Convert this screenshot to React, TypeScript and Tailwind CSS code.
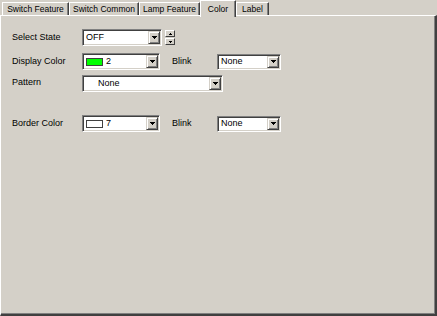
import type { ReactNode } from "react";

const tabs = [
  { label: "Switch Feature", w: "w-[67px]" },
  { label: "Switch Common", w: "w-[70px]" },
  { label: "Lamp Feature", w: "w-[61px]" },
  { label: "Color", w: "w-[36px]", active: true },
  { label: "Label", w: "w-[33px]" },
];

function Arrow() {
  return (
    <svg width="5" height="3" viewBox="0 0 5 3" shapeRendering="crispEdges">
      <rect x="0" y="0" width="5" height="1" fill="#000" />
      <rect x="1" y="1" width="3" height="1" fill="#000" />
      <rect x="2" y="2" width="1" height="1" fill="#000" />
    </svg>
  );
}

function DropButton() {
  return (
    <div className="w-[12px] my-[1px] mr-[1px] flex items-center justify-center bg-[#d4d0c8] border border-t-[#d4d0c8] border-l-[#d4d0c8] border-b-[#404040] border-r-[#404040] shadow-[inset_1px_1px_0_#fff,inset_-1px_-1px_0_#808080]">
      <Arrow />
    </div>
  );
}

function Combo({ className, children }: { className: string; children: ReactNode }) {
  return (
    <div
      className={`flex bg-white border border-t-[#808080] border-l-[#808080] border-b-white border-r-white shadow-[inset_1px_1px_0_#404040,inset_-1px_-1px_0_#d4d0c8] ${className}`}
    >
      <div className="flex-1 flex items-center min-w-0 pl-[3px]">{children}</div>
      <DropButton />
    </div>
  );
}

function Swatch({ fill }: { fill: string }) {
  return <span className={`w-[17px] h-[8px] border border-[#404040] mr-[3px] ${fill}`} />;
}

function Spinner() {
  return (
    <div className="ml-[3px] flex flex-col gap-[1px] w-[10px]">
      {[true, false].map((up) => (
        <div
          key={String(up)}
          className="h-[7px] flex items-center justify-center bg-[#d4d0c8] border border-t-white border-l-white border-b-[#404040] border-r-[#404040]"
        >
          <svg width="3" height="2" viewBox="0 0 3 2" shapeRendering="crispEdges">
            {up ? (
              <>
                <rect x="1" y="0" width="1" height="1" fill="#000" />
                <rect x="0" y="1" width="3" height="1" fill="#000" />
              </>
            ) : (
              <>
                <rect x="0" y="0" width="3" height="1" fill="#000" />
                <rect x="1" y="1" width="1" height="1" fill="#000" />
              </>
            )}
          </svg>
        </div>
      ))}
    </div>
  );
}

export default function App() {
  return (
    <div className="w-[437px] h-[316px] bg-[#d4d0c8] flex flex-col text-[9px] text-black font-['Liberation_Sans',Arial,sans-serif] overflow-hidden">
      {/* tab strip */}
      <div className="flex items-end h-[15px] pl-[2px] text-[8.5px]">
        {tabs.map((t) =>
          t.active ? (
            <div
              key={t.label}
              className={`${t.w} relative z-10 h-[17px] -mb-[2px] bg-[#d4d0c8] border-l border-t border-white border-r border-r-[#404040] shadow-[inset_-1px_0_0_#808080] flex items-start justify-center pt-[2px]`}
            >
              {t.label}
            </div>
          ) : (
            <div
              key={t.label}
              className={`${t.w} h-[13px] bg-[#d4d0c8] border-l border-t border-white border-r border-r-[#404040] shadow-[inset_-1px_0_0_#808080] flex items-center justify-center pt-[1px]`}
            >
              {t.label}
            </div>
          )
        )}
      </div>

      {/* tab page */}
      <div className="flex-1 border-t border-l border-white border-r-2 border-b-2 border-r-[#404040] border-b-[#404040] shadow-[inset_-1px_-1px_0_#808080] pt-[13px] pl-[11px]">
        <div className="flex items-center h-[17px]">
          <span className="w-[70px] mt-[1px]">Select State</span>
          <Combo className="w-[80px] h-[17px]">OFF</Combo>
          <Spinner />
        </div>

        <div className="flex items-center h-[17px] mt-[7px]">
          <span className="w-[70px] mt-[1px]">Display Color</span>
          <Combo className="w-[78px] h-[17px]">
            <Swatch fill="bg-[#00ff00]" />2
          </Combo>
          <span className="ml-[12px] w-[45px] mt-[1px]">Blink</span>
          <Combo className="w-[64px] h-[16px]">None</Combo>
        </div>

        <div className="flex items-center h-[17px] mt-[5px]">
          <span className="w-[70px] -mt-[2px]">Pattern</span>
          <Combo className="w-[141px] h-[17px]">
            <span className="pl-[12px]">None</span>
          </Combo>
        </div>

        <div className="flex items-center h-[17px] mt-[23px]">
          <span className="w-[70px] mt-[1px]">Border Color</span>
          <Combo className="w-[78px] h-[17px]">
            <Swatch fill="bg-white" />7
          </Combo>
          <span className="ml-[12px] w-[45px] mt-[1px]">Blink</span>
          <Combo className="w-[64px] h-[16px]">None</Combo>
        </div>
      </div>
    </div>
  );
}
